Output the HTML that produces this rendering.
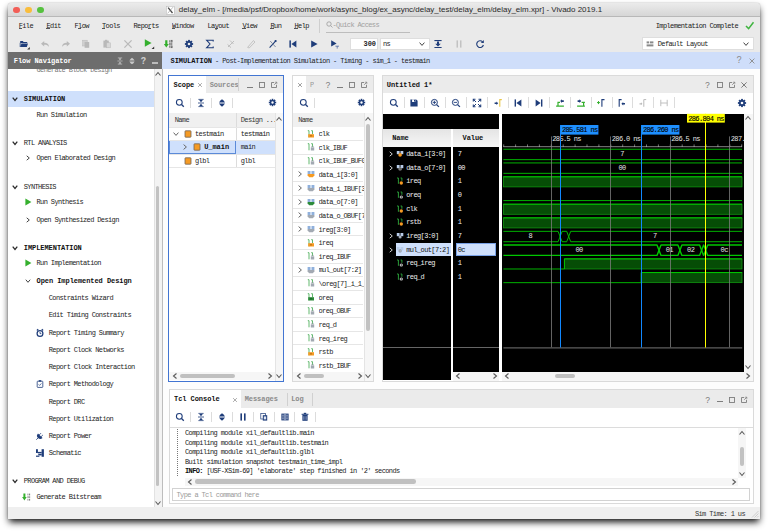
<!DOCTYPE html><html><head><meta charset="utf-8"><title>delay_elm - Vivado 2019.1</title><style>
*{margin:0;padding:0;box-sizing:border-box}
html,body{width:768px;height:532px;overflow:hidden;background:#fff}
body{position:relative;font-family:"Liberation Mono","DejaVu Sans Mono",monospace;font-size:7px;letter-spacing:-0.625px;color:#333}
.b{position:absolute;display:block}
.t{position:absolute;white-space:pre;line-height:12px;height:12px;transform:scaleY(1.12);transform-origin:50% 55%}
.bd{font-weight:bold;color:#111;letter-spacing:-0.06px}
.g{color:#8a8a8a}
.w{color:#fff}
.sans{font-family:"Liberation Sans",sans-serif;letter-spacing:0;transform:none}
u{text-decoration:underline;text-underline-offset:0.3px;text-decoration-thickness:0.8px;text-decoration-color:#666}
</style></head><body>
<div class="b " style="left:8px;top:3px;width:752px;height:516px;background:#ececec;border-radius:3px 3px 0 0;box-shadow:0 4px 7px -1.5px rgba(0,0,0,.95),0 0 1px rgba(0,0,0,.45)"></div>
<div class="b " style="left:8px;top:3px;width:752px;height:13.5px;background:linear-gradient(#ebebeb,#d6d6d6);border-radius:3px 3px 0 0;border-bottom:0.5px solid #b8b8b8"></div>
<div class="b " style="left:13.2px;top:6.6px;width:6.8px;height:6.8px;background:#f25e57;border-radius:50%"></div>
<div class="b " style="left:25.1px;top:6.6px;width:6.8px;height:6.8px;background:#f9bd3c;border-radius:50%"></div>
<div class="b " style="left:37px;top:6.6px;width:6.8px;height:6.8px;background:#56c13f;border-radius:50%"></div>
<svg class="b" style="left:166.2px;top:6.2px;" width="8.6" height="8.6" viewBox="0 0 8.6 8.6"><rect x="0.3" y="0.3" width="8" height="8" fill="#fff" stroke="#bdbdbd" stroke-width="0.6"/><path d="M2.1 1.6L6.5 7" stroke="#4a4a4a" stroke-width="1.3"/><path d="M7 1.2L1.6 7.4" stroke="#777" stroke-width="0.5"/></svg>
<span class="t sans" style="left:178.75px;top:4px;font-size:7.98px;color:#2a2a2a">delay_elm - [/media/psf/Dropbox/home/work/async_blog/ex_async/delay_test/delay_elm/delay_elm.xpr] - Vivado 2019.1</span>
<div class="b " style="left:8px;top:16.5px;width:752px;height:35.5px;background:#eaeaea"></div>
<span class="t" style="left:18.7px;top:19.5px;color:#222">File</span>
<div class="b " style="left:18.6px;top:28.3px;width:3.3px;height:0.8px;background:#555"></div>
<span class="t" style="left:46.5px;top:19.5px;color:#222">Edit</span>
<div class="b " style="left:46.4px;top:28.3px;width:3.3px;height:0.8px;background:#555"></div>
<span class="t" style="left:74.5px;top:19.5px;color:#222">Flow</span>
<div class="b " style="left:77.975px;top:28.3px;width:3.3px;height:0.8px;background:#555"></div>
<span class="t" style="left:102px;top:19.5px;color:#222">Tools</span>
<div class="b " style="left:101.9px;top:28.3px;width:3.3px;height:0.8px;background:#555"></div>
<span class="t" style="left:133.5px;top:19.5px;color:#222">Reports</span>
<div class="b " style="left:147.7px;top:28.3px;width:3.3px;height:0.8px;background:#555"></div>
<span class="t" style="left:172px;top:19.5px;color:#222">Window</span>
<div class="b " style="left:171.9px;top:28.3px;width:3.3px;height:0.8px;background:#555"></div>
<span class="t" style="left:207.5px;top:19.5px;color:#222">Layout</span>
<div class="b " style="left:214.55px;top:28.3px;width:3.3px;height:0.8px;background:#555"></div>
<span class="t" style="left:242.5px;top:19.5px;color:#222">View</span>
<div class="b " style="left:242.4px;top:28.3px;width:3.3px;height:0.8px;background:#555"></div>
<span class="t" style="left:270.5px;top:19.5px;color:#222">Run</span>
<div class="b " style="left:270.4px;top:28.3px;width:3.3px;height:0.8px;background:#555"></div>
<span class="t" style="left:294.5px;top:19.5px;color:#222">Help</span>
<div class="b " style="left:294.4px;top:28.3px;width:3.3px;height:0.8px;background:#555"></div>
<div class="b " style="left:319px;top:19px;width:0.6px;height:14px;background:#cfcfcf"></div>
<svg class="b" style="left:326px;top:20.5px;" width="8" height="8" viewBox="0 0 8 8"><circle cx="3" cy="3" r="2.2" fill="none" stroke="#9a9a9a" stroke-width="0.8"/><path d="M4.6 4.6L6.5 6.5" stroke="#9a9a9a" stroke-width="0.8"/></svg>
<span class="t g" style="left:332.5px;top:18.5px;color:#a0a0a0">-Quick Access</span>
<div class="b " style="left:326px;top:31.5px;width:84px;height:0.6px;background:#bdbdbd"></div>
<span class="t " style="right:30px;top:19.5px;color:#222">Implementation Complete</span>
<svg class="b" style="left:745px;top:21px;" width="10" height="9" viewBox="0 0 10 9"><path d="M1 5 L3.6 7.6 L8.5 1.2" fill="none" stroke="#3fb43f" stroke-width="1.5"/></svg>
<svg class="b" style="left:17.25px;top:36.5px;" width="14" height="14" viewBox="-7 -7 14 14"><path d="M-3.8 -3 h2.6 l0.8 0.9 h3.6 v1.1 h-7z" fill="#1f3d7a"/><path d="M-3.8 3 l1.2 -3.6 h6.6 l-1.2 3.6z" fill="#1f3d7a"/><path d="M-3.8 -1.2v4.2" stroke="#1f3d7a" stroke-width="0.8"/><path d="M5.8 3v2.6h-2.6z" fill="#333"/></svg>
<svg class="b" style="left:39.5px;top:38.5px;" width="10" height="10" viewBox="-5 -5 10 10"><path d="M-4 -0.3 L-0.8 -3 v1.7 c3 0 4.6 1.4 4.8 4.2 c-1 -1.6 -2.4 -2.2 -4.8 -2.2 v1.8z" fill="#b9b9b9"/></svg>
<svg class="b" style="left:60.5px;top:38.5px;" width="10" height="10" viewBox="-5 -5 10 10"><path d="M4 -0.3 L0.8 -3 v1.7 c-3 0 -4.6 1.4 -4.8 4.2 c1 -1.6 2.4 -2.2 4.8 -2.2 v1.8z" fill="#b9b9b9"/></svg>
<svg class="b" style="left:81.25px;top:38.5px;" width="10" height="10" viewBox="-5 -5 10 10"><rect x="-3.4" y="-3.8" width="4.6" height="5.8" fill="#d0d0d0" stroke="#b9b9b9" stroke-width="0.5"/><rect x="-1.4" y="-2" width="4.6" height="5.8" fill="#b9b9b9"/></svg>
<svg class="b" style="left:102px;top:38.5px;" width="10" height="10" viewBox="-5 -5 10 10"><rect x="-3.6" y="-3.4" width="5.4" height="7" fill="#b9b9b9"/><rect x="-2" y="-4.2" width="2.2" height="1.4" fill="#b9b9b9"/><rect x="-0.4" y="-1.2" width="4" height="5" fill="#d8d8d8" stroke="#b9b9b9" stroke-width="0.5"/></svg>
<svg class="b" style="left:122.75px;top:38.5px;" width="10" height="10" viewBox="-5 -5 10 10"><path d="M-3.6 -3.6L3.6 3.6M3.6 -3.6L-3.6 3.6" stroke="#b9b9b9" stroke-width="1.3"/></svg>
<svg class="b" style="left:140.8px;top:36.1px;" width="14" height="14" viewBox="-7 -7 14 14"><path d="M-3.2 -3.8L3.6 0L-3.2 3.8z" fill="#35b02e"/><path d="M6.2 3.4v2.6h-2.6z" fill="#333"/></svg>
<svg class="b" style="left:163.75px;top:38.5px;" width="10" height="10" viewBox="-5 -5 10 10"><path d="M-3.8 -3.8h2.2v3.8h1.4l-2.5 3.6l-2.5 -3.6h1.4z" fill="#35b02e"/><g fill="#555"><rect x="0.4" y="-3.8" width="0.8" height="2"/><rect x="2" y="-3.8" width="1.2" height="2" fill="none" stroke="#555" stroke-width="0.5"/><rect x="0.4" y="-1" width="1.2" height="2" fill="none" stroke="#555" stroke-width="0.5"/><rect x="2.4" y="-1" width="0.8" height="2"/><rect x="0.4" y="1.8" width="0.8" height="2"/><rect x="2" y="1.8" width="1.2" height="2" fill="none" stroke="#555" stroke-width="0.5"/></g></svg>
<svg class="b" style="left:184.25px;top:38.5px;" width="10" height="10" viewBox="-5 -5 10 10"><g fill="#1f3d7a"><circle r="2.9"/><g ><rect x="-0.9" y="-4.1" width="1.8" height="8.2"/></g><rect x="-0.9" y="-4.1" width="1.8" height="8.2" transform="rotate(45)"/><rect x="-0.9" y="-4.1" width="1.8" height="8.2" transform="rotate(90)"/><rect x="-0.9" y="-4.1" width="1.8" height="8.2" transform="rotate(135)"/></g><circle r="1.3" fill="#eaeaea"/></svg>
<svg class="b" style="left:205px;top:38.5px;" width="10" height="10" viewBox="-5 -5 10 10"><path d="M3.2 -2.6v-1.2h-6.6l3.4 3.8l-3.4 3.8h6.6v-1.2" fill="none" stroke="#1f3d7a" stroke-width="1.1"/></svg>
<svg class="b" style="left:225.75px;top:38.5px;" width="10" height="10" viewBox="-5 -5 10 10"><path d="M-3 3L3 -3M-1 -3.5l3.5 3.5M-3.4 0.5L0 3.6" stroke="#b9b9b9" stroke-width="0.9"/></svg>
<svg class="b" style="left:246.25px;top:38.5px;" width="10" height="10" viewBox="-5 -5 10 10"><path d="M-3.4 3.4L2.4 -3.4l1.6 1.4L-1.8 4z" fill="none" stroke="#b9b9b9" stroke-width="0.8"/></svg>
<svg class="b" style="left:267.5px;top:38.5px;" width="10" height="10" viewBox="-5 -5 10 10"><path d="M-3.4 3.6L3 -3.4" stroke="#1f3d7a" stroke-width="1.1"/><path d="M-2.8 -3l5.4 6" stroke="#7a869c" stroke-width="0.9"/><circle cx="2.6" cy="-3" r="1.1" fill="#1f3d7a"/></svg>
<svg class="b" style="left:288.25px;top:38.5px;" width="10" height="10" viewBox="-5 -5 10 10"><rect x="-3.6" y="-3.6" width="1.5" height="7.2" fill="#1f3d7a"/><path d="M3.4 -3.6L-1.6 0L3.4 3.6z" fill="#1f3d7a"/></svg>
<svg class="b" style="left:308.75px;top:38.5px;" width="10" height="10" viewBox="-5 -5 10 10"><path d="M-2.8 -3.6L3.6 0L-2.8 3.6z" fill="#1f3d7a"/></svg>
<svg class="b" style="left:330px;top:38.5px;" width="10" height="10" viewBox="-5 -5 10 10"><path d="M-3.8 -3.8L1.6 -0.6L-3.8 2.6z" fill="#1f3d7a"/><path d="M0.4 2.2h3.6M2.2 2.2v2.4" stroke="#3c5a99" stroke-width="0.7"/></svg>
<div class="b " style="left:349.5px;top:37.5px;width:28.5px;height:12px;background:#fff;border:0.5px solid #dedede"></div>
<span class="t bd" style="right:392px;top:37.5px;color:#222">300</span>
<div class="b " style="left:379.5px;top:37.5px;width:50px;height:12px;background:#fff;border:0.5px solid #dedede"></div>
<span class="t " style="left:383px;top:37.5px;color:#222">ns</span>
<svg class="b" style="left:417px;top:38.5px;" width="10" height="10" viewBox="-5 -5 10 10"><path d="M-2.4 -1.4L0 1.4L2.4 -1.4" fill="none" stroke="#444" stroke-width="1"/></svg>
<svg class="b" style="left:433.25px;top:38.5px;" width="10" height="10" viewBox="-5 -5 10 10"><rect x="-3.6" y="-4" width="7.2" height="1.1" fill="#1f3d7a"/><path d="M-1 -2.4h2v2.2h1.8L0 2.6L-2.8 -0.2h1.8z" fill="#1f3d7a"/><rect x="-3.6" y="3" width="7.2" height="1" fill="#1f3d7a"/></svg>
<svg class="b" style="left:454.25px;top:38.5px;" width="10" height="10" viewBox="-5 -5 10 10"><rect x="-2.4" y="-3.6" width="1.2" height="7.2" fill="#b9b9b9"/><rect x="1.2" y="-3.6" width="1.2" height="7.2" fill="#b9b9b9"/></svg>
<svg class="b" style="left:475px;top:38.5px;" width="10" height="10" viewBox="-5 -5 10 10"><path d="M2.6 -2.2A3.4 3.4 0 1 0 3.4 1" fill="none" stroke="#1f3d7a" stroke-width="1.1"/><path d="M3.8 -4v3h-3z" fill="#1f3d7a"/></svg>
<div class="b " style="left:642.25px;top:36.75px;width:112px;height:13.25px;background:#fff;border:0.5px solid #dedede"></div>
<svg class="b" style="left:644.75px;top:38.5px;" width="10" height="10" viewBox="-5 -5 10 10"><rect x="-3.4" y="-2.6" width="2.6" height="2" fill="#8a8a8a"/><rect x="0" y="-2.6" width="3.4" height="2" fill="#8a8a8a"/><rect x="-3.4" y="0.4" width="6.8" height="2" fill="#8a8a8a"/></svg>
<span class="t " style="left:657.75px;top:37.5px;color:#222">Default Layout</span>
<svg class="b" style="left:741px;top:38.5px;" width="10" height="10" viewBox="-5 -5 10 10"><path d="M-2.4 -1.4L0 1.4L2.4 -1.4" fill="none" stroke="#444" stroke-width="1"/></svg>
<div class="b " style="left:8px;top:52px;width:154px;height:16.75px;background:#6d6d6d"></div>
<span class="t bd w" style="left:13.75px;top:54.5px;color:#fff">Flow Navigator</span>
<svg class="b" style="left:114.6px;top:55.5px;" width="10" height="10" viewBox="-5 -5 10 10"><path d="M-2.2 -3.1h4.4M-2.2 3.1h4.4M-2.6 0h5.2" stroke="#d4d4d4" stroke-width="0.6"/><path d="M-1.3 -2.6h2.6L0 -0.7zM-1.3 2.6h2.6L0 0.7z" fill="#d4d4d4"/></svg>
<svg class="b" style="left:126.5px;top:55.7px;" width="10" height="10" viewBox="-5 -5 10 10"><path d="M-2.6 -0.5Q-1.6 -2.4 0 -3.3Q1.6 -2.4 2.6 -0.5zM-2.6 0.5Q-1.6 2.4 0 3.3Q1.6 2.4 2.6 0.5z" fill="#c8c8c8"/></svg>
<span class="t bd" style="left:140.8px;top:55.5px;color:#d0d0d0;font-size:9px">?</span>
<div class="b " style="left:152px;top:62.3px;width:6.2px;height:1.4px;background:#bcbcbc"></div>
<div class="b " style="left:162px;top:52px;width:598px;height:16.75px;background:#cfdefa"></div>
<span class="t bd" style="left:170.5px;top:54.5px;">SIMULATION</span>
<span class="t " style="left:211.5px;top:54.5px;color:#222"> - Post-Implementation Simulation - Timing - sim_1 - testmain</span>
<span class="t " style="left:736.5px;top:55.3px;color:#8a8a8a;font-size:9px">?</span>
<svg class="b" style="left:746.5px;top:55.9px;" width="10" height="10" viewBox="-5 -5 10 10"><path d="M-2.4 -2.4L2.4 2.4M2.4 -2.4L-2.4 2.4" stroke="#8a8a8a" stroke-width="0.9"/></svg>
<div class="b " style="left:8px;top:68.75px;width:145.5px;height:438.5px;background:#fff"></div>
<div class="b " style="left:153.5px;top:68.75px;width:8.5px;height:438.5px;background:#f3f3f3;border-left:0.5px solid #e2e2e2"></div>
<div class="b " style="left:155.6px;top:185.5px;width:3.6px;height:300px;background:#c2c2c2;border-radius:2px"></div>
<svg class="b" style="left:152.7px;top:68.75px;" width="10" height="10" viewBox="-5 -5 10 10"><path d="M-2.5 1.5L0 -1.5L2.5 1.5" fill="none" stroke="#5a5a5a" stroke-width="1.1"/></svg>
<svg class="b" style="left:152.7px;top:498px;" width="10" height="10" viewBox="-5 -5 10 10"><path d="M-2.5 -1.5L0 1.5L2.5 -1.5" fill="none" stroke="#5a5a5a" stroke-width="1.1"/></svg>
<div class="b " style="left:8px;top:90.5px;width:145.5px;height:16.5px;background:#cfe0fc"></div>
<div class="b" style="left:8px;top:68.75px;width:145px;height:8px;overflow:hidden"><span class="t" style="left:28.5px;top:-4.3px;color:#777">Generate Block Design</span></div>
<svg class="b" style="left:10.2px;top:93.65px;" width="10" height="10" viewBox="-5 -5 10 10"><path d="M-2.3 -1.4L0 1.4L2.3 -1.4" fill="none" stroke="#2a2a2a" stroke-width="1.25"/></svg>
<span class="t bd" style="left:23.75px;top:92.65px;">SIMULATION</span>
<span class="t " style="left:36.5px;top:108.65px;color:#222">Run Simulation</span>
<svg class="b" style="left:10.2px;top:137.9px;" width="10" height="10" viewBox="-5 -5 10 10"><path d="M-2.3 -1.4L0 1.4L2.3 -1.4" fill="none" stroke="#2a2a2a" stroke-width="1.25"/></svg>
<span class="t " style="left:23.75px;top:136.9px;color:#222">RTL ANALYSIS</span>
<svg class="b" style="left:22.5px;top:153.4px;" width="10" height="10" viewBox="-5 -5 10 10"><path d="M-1.3 -2.2L1.3 0L-1.3 2.2" fill="none" stroke="#444" stroke-width="1"/></svg>
<span class="t " style="left:36.5px;top:152.4px;color:#222">Open Elaborated Design</span>
<svg class="b" style="left:10.2px;top:181.65px;" width="10" height="10" viewBox="-5 -5 10 10"><path d="M-2.3 -1.4L0 1.4L2.3 -1.4" fill="none" stroke="#2a2a2a" stroke-width="1.25"/></svg>
<span class="t " style="left:23.75px;top:180.65px;color:#222">SYNTHESIS</span>
<svg class="b" style="left:22.5px;top:197.4px;" width="10" height="10" viewBox="-5 -5 10 10"><path d="M-2.6 -3.4L3.4 0L-2.6 3.4z" fill="#35b02e"/></svg>
<span class="t " style="left:36.5px;top:196.4px;color:#222">Run Synthesis</span>
<svg class="b" style="left:22.5px;top:214.9px;" width="10" height="10" viewBox="-5 -5 10 10"><path d="M-1.3 -2.2L1.3 0L-1.3 2.2" fill="none" stroke="#444" stroke-width="1"/></svg>
<span class="t " style="left:36.5px;top:213.9px;color:#222">Open Synthesized Design</span>
<svg class="b" style="left:10.2px;top:242.9px;" width="10" height="10" viewBox="-5 -5 10 10"><path d="M-2.3 -1.4L0 1.4L2.3 -1.4" fill="none" stroke="#2a2a2a" stroke-width="1.25"/></svg>
<span class="t bd" style="left:23.75px;top:241.9px;">IMPLEMENTATION</span>
<svg class="b" style="left:22.5px;top:258.4px;" width="10" height="10" viewBox="-5 -5 10 10"><path d="M-2.6 -3.4L3.4 0L-2.6 3.4z" fill="#35b02e"/></svg>
<span class="t " style="left:36.5px;top:257.4px;color:#222">Run Implementation</span>
<svg class="b" style="left:22.5px;top:275.9px;" width="10" height="10" viewBox="-5 -5 10 10"><path d="M-2.2 -1.3L0 1.3L2.2 -1.3" fill="none" stroke="#444" stroke-width="1"/></svg>
<span class="t bd" style="left:36.5px;top:274.9px;">Open Implemented Design</span>
<span class="t " style="left:48.75px;top:292.15px;color:#222">Constraints Wizard</span>
<span class="t " style="left:48.75px;top:309.15px;color:#222">Edit Timing Constraints</span>
<svg class="b" style="left:35.2px;top:327.65px;" width="10" height="10" viewBox="-5 -5 10 10"><circle cy="0.5" r="2.9" fill="none" stroke="#1f3d7a" stroke-width="1.25"/><path d="M0 -1.1v1.7h1.3" fill="none" stroke="#1f3d7a" stroke-width="0.8"/><path d="M-3.1 -2.5l1.3 -1.3M3.1 -2.5l-1.3 -1.3" stroke="#1f3d7a" stroke-width="1.2"/></svg>
<span class="t " style="left:48.75px;top:326.65px;color:#222">Report Timing Summary</span>
<span class="t " style="left:48.75px;top:343.65px;color:#222">Report Clock Networks</span>
<span class="t " style="left:48.75px;top:360.9px;color:#222">Report Clock Interaction</span>
<svg class="b" style="left:35.2px;top:379.15px;" width="10" height="10" viewBox="-5 -5 10 10"><rect x="-2.8" y="-2.8" width="5.6" height="6.2" rx="0.6" fill="none" stroke="#1f3d7a" stroke-width="0.8"/><rect x="-1.2" y="-3.8" width="2.4" height="1.4" fill="#1f3d7a"/><path d="M-1.4 0.4l1 1l1.8 -2" fill="none" stroke="#1f3d7a" stroke-width="0.7"/></svg>
<span class="t " style="left:48.75px;top:378.15px;color:#222">Report Methodology</span>
<span class="t " style="left:48.75px;top:395.65px;color:#222">Report DRC</span>
<span class="t " style="left:48.75px;top:412.65px;color:#222">Report Utilization</span>
<svg class="b" style="left:35.3px;top:430.7px;" width="10" height="10" viewBox="-5 -5 10 10"><g transform="rotate(45)" fill="#1f3d7a" stroke="#1f3d7a"><path d="M-3.2 -0.4A3.2 3.2 0 0 0 3.2 -0.4z" stroke="none"/><path d="M-1.3 -0.4v-2.2M1.3 -0.4v-2.2" stroke-width="0.9"/><path d="M0 2.6v2.6" stroke-width="0.8"/></g></svg>
<span class="t " style="left:48.75px;top:429.9px;color:#222">Report Power</span>
<svg class="b" style="left:35.2px;top:448.35px;" width="10" height="10" viewBox="-5 -5 10 10"><g fill="#1f3d7a"><rect x="1.6" y="-3.8" width="2.3" height="7.6"/><rect x="-4" y="-3.8" width="1.9" height="3.8"/><rect x="-2.2" y="-1.1" width="3.9" height="1.5"/><rect x="-1.7" y="1" width="3.4" height="1.4"/><rect x="-4" y="2.6" width="3.4" height="1.2"/></g></svg>
<span class="t " style="left:48.75px;top:447.15px;color:#222">Schematic</span>
<svg class="b" style="left:10.2px;top:476.4px;" width="10" height="10" viewBox="-5 -5 10 10"><path d="M-2.3 -1.4L0 1.4L2.3 -1.4" fill="none" stroke="#2a2a2a" stroke-width="1.25"/></svg>
<span class="t " style="left:23.75px;top:475.4px;color:#222">PROGRAM AND DEBUG</span>
<svg class="b" style="left:22.2px;top:491.9px;" width="10" height="10" viewBox="-5 -5 10 10"><path d="M-3.6 -3.6h2v3.6h1.3l-2.3 3.4l-2.3 -3.4h1.3z" fill="#35b02e"/><g fill="#666"><rect x="0.6" y="-3.4" width="0.7" height="1.8"/><rect x="2.2" y="-3.4" width="0.9" height="1.8"/><rect x="0.6" y="-0.8" width="0.9" height="1.8"/><rect x="2.4" y="-0.8" width="0.7" height="1.8"/><rect x="0.6" y="1.8" width="0.7" height="1.8"/><rect x="2.2" y="1.8" width="0.9" height="1.8"/></g></svg>
<span class="t " style="left:36.5px;top:490.9px;color:#222">Generate Bitstream</span>
<div class="b " style="left:8px;top:507.25px;width:752px;height:11.75px;background:#efefef"></div>
<span class="t " style="right:23px;top:507.5px;color:#333">Sim Time: 1 us</span>
<svg class="b" style="left:751px;top:510px;" width="8" height="8" viewBox="0 0 8 8"><path d="M1 7.5L7.5 1M3.5 7.5L7.5 3.5M6 7.5L7.5 6" stroke="#b5b5b5" stroke-width="0.6"/></svg>
<div class="b " style="left:162.5px;top:68.75px;width:597.5px;height:438.5px;background:#fdfdfd"></div>
<div class="b " style="left:162px;top:68.75px;width:0.7px;height:438.5px;background:#bdbdbd"></div>
<div class="b " style="left:168.1px;top:75.2px;width:116.2px;height:306.4px;background:#fff;border:1.25px solid #4275d2"></div>
<div class="b " style="left:169.3px;top:76.2px;width:114px;height:16.5px;background:#ebebeb"></div>
<div class="b " style="left:169.3px;top:76.2px;width:36.5px;height:16.5px;background:#fff"></div>
<span class="t bd" style="left:173.5px;top:78.5px;">Scope</span>
<svg class="b" style="left:194.5px;top:80.3px;" width="10" height="10" viewBox="-5 -5 10 10"><path d="M-1.9 -1.9L1.9 1.9M1.9 -1.9L-1.9 1.9" stroke="#8a8a8a" stroke-width="0.7"/></svg>
<span class="t bd" style="left:209.7px;top:78.6px;color:#8c8c8c">Sources</span>
<div class="b " style="left:238.3px;top:78px;width:0.6px;height:13px;background:#d0d0d0"></div>
<div class="b " style="left:247px;top:86.7px;width:6px;height:1px;background:#7d7d7d"></div>
<svg class="b" style="left:257px;top:79.8px;" width="10" height="10" viewBox="-5 -5 10 10"><rect x="-2.5" y="-2.5" width="5" height="5" fill="none" stroke="#7d7d7d" stroke-width="0.9"/></svg>
<svg class="b" style="left:269.2px;top:79.8px;" width="10" height="10" viewBox="-5 -5 10 10"><path d="M0.2 -2.5h-2.7v5h5v-2.7" fill="none" stroke="#7d7d7d" stroke-width="0.9"/><path d="M0.2 -0.2L2.7 -2.7M1.2 -2.8h1.6v1.6" fill="none" stroke="#7d7d7d" stroke-width="0.8"/></svg>
<svg class="b" style="left:175.3px;top:97.7px;" width="10" height="10" viewBox="-5 -5 10 10"><circle cx="-0.7" cy="-0.7" r="2.9" fill="none" stroke="#1f3d7a" stroke-width="1.05"/><path d="M1.5 1.5L3.8 3.8" stroke="#1f3d7a" stroke-width="1.3"/></svg>
<div class="b " style="left:190.2px;top:97.7px;width:0.6px;height:10px;background:#dcdcdc"></div>
<svg class="b" style="left:195.8px;top:97.7px;" width="10" height="10" viewBox="-5 -5 10 10"><path d="M-2.6 -3.6h5.2M-2.6 3.6h5.2M-3 0h6" stroke="#1f3d7a" stroke-width="0.8"/><path d="M-1.8 -3h3.6L0 -0.8zM-1.8 3h3.6L0 0.8z" fill="#1f3d7a"/></svg>
<div class="b " style="left:211px;top:97.7px;width:0.6px;height:10px;background:#dcdcdc"></div>
<svg class="b" style="left:216.7px;top:97.7px;" width="10" height="10" viewBox="-5 -5 10 10"><path d="M-3 -0.6Q-1.8 -2.6 0 -3.7Q1.8 -2.6 3 -0.6zM-3 0.6Q-1.8 2.6 0 3.7Q1.8 2.6 3 0.6z" fill="#1f3d7a"/></svg>
<div class="b " style="left:232.2px;top:97.7px;width:0.6px;height:10px;background:#dcdcdc"></div>
<svg class="b" style="left:268px;top:98.2px;" width="9" height="9" viewBox="-5 -5 10 10"><g fill="#1f3d7a"><circle r="2.9"/><g ><rect x="-0.9" y="-4.1" width="1.8" height="8.2"/></g><rect x="-0.9" y="-4.1" width="1.8" height="8.2" transform="rotate(45)"/><rect x="-0.9" y="-4.1" width="1.8" height="8.2" transform="rotate(90)"/><rect x="-0.9" y="-4.1" width="1.8" height="8.2" transform="rotate(135)"/></g><circle r="1.3" fill="#fff"/></svg>
<div class="b " style="left:169.3px;top:112.8px;width:114px;height:14px;background:#f0f0f0"></div>
<span class="t " style="left:174.7px;top:114px;color:#333">Name</span>
<span class="t " style="left:240.8px;top:114px;color:#333">Design ...</span>
<div class="b " style="left:235.6px;top:112.8px;width:0.6px;height:54.5px;background:#dcdcdc"></div>
<div class="b " style="left:169.3px;top:140.42px;width:106px;height:13.62px;background:#cfe0fc"></div>
<div class="b " style="left:169.3px;top:140.42px;width:66.6px;height:13.62px;background:#cfe0fc;border:0.7px solid #5b8ad8"></div>
<div class="b " style="left:169.3px;top:126.5px;width:106px;height:0.6px;background:#e6e6e6"></div>
<div class="b " style="left:169.3px;top:140.12px;width:106px;height:0.6px;background:#e6e6e6"></div>
<div class="b " style="left:169.3px;top:153.74px;width:106px;height:0.6px;background:#e6e6e6"></div>
<div class="b " style="left:169.3px;top:167.36px;width:106px;height:0.6px;background:#e6e6e6"></div>
<svg class="b" style="left:171.2px;top:128.61px;" width="10" height="10" viewBox="-5 -5 10 10"><path d="M-2.4 -1.4L0 1.4L2.4 -1.4" fill="none" stroke="#666" stroke-width="1"/></svg>
<svg class="b" style="left:182.7px;top:128.61px;" width="10" height="10" viewBox="-5 -5 10 10"><rect x="-3" y="-3.2" width="6" height="6.4" rx="0.6" fill="#f59a23" stroke="#6f6258" stroke-width="0.8"/></svg>
<span class="t " style="left:195px;top:127.61px;color:#222">testmain</span>
<span class="t " style="left:240.8px;top:127.61px;color:#222">testmain</span>
<svg class="b" style="left:180.3px;top:142.23px;" width="10" height="10" viewBox="-5 -5 10 10"><path d="M-1.4 -2.4L1.4 0L-1.4 2.4" fill="none" stroke="#666" stroke-width="1"/></svg>
<svg class="b" style="left:192px;top:142.23px;" width="10" height="10" viewBox="-5 -5 10 10"><rect x="-3" y="-3.2" width="6" height="6.4" rx="0.6" fill="#f59a23" stroke="#6f6258" stroke-width="0.8"/></svg>
<span class="t bd" style="left:204.2px;top:141.23px;">U_main</span>
<span class="t " style="left:240.8px;top:141.23px;color:#222">main</span>
<svg class="b" style="left:182.7px;top:155.85px;" width="10" height="10" viewBox="-5 -5 10 10"><rect x="-3" y="-3.2" width="6" height="6.4" rx="0.6" fill="#f59a23" stroke="#6f6258" stroke-width="0.8"/></svg>
<span class="t " style="left:195px;top:154.85px;color:#222">glbl</span>
<span class="t " style="left:240.8px;top:154.85px;color:#222">glbl</span>
<div class="b " style="left:275px;top:112.8px;width:8.3px;height:267.8px;background:#f6f6f6;border-left:0.5px solid #e4e4e4"></div>
<svg class="b" style="left:273.8px;top:114px;" width="10" height="10" viewBox="-5 -5 10 10"><path d="M-2.5 1.5L0 -1.5L2.5 1.5" fill="none" stroke="#5a5a5a" stroke-width="1.1"/></svg>
<svg class="b" style="left:273.8px;top:371px;" width="10" height="10" viewBox="-5 -5 10 10"><path d="M-2.5 -1.5L0 1.5L2.5 -1.5" fill="none" stroke="#5a5a5a" stroke-width="1.1"/></svg>
<div class="b " style="left:169.3px;top:371.5px;width:106px;height:8.9px;background:#f6f6f6"></div>
<svg class="b" style="left:170px;top:371.1px;" width="10" height="10" viewBox="-5 -5 10 10"><path d="M1.5 -2.5L-1.5 0L1.5 2.5" fill="none" stroke="#5a5a5a" stroke-width="1.1"/></svg>
<svg class="b" style="left:265px;top:371.1px;" width="10" height="10" viewBox="-5 -5 10 10"><path d="M-1.5 -2.5L1.5 0L-1.5 2.5" fill="none" stroke="#5a5a5a" stroke-width="1.1"/></svg>
<div class="b " style="left:180px;top:373.7px;width:55px;height:4.6px;background:#c0c0c0;border-radius:2.3px"></div>
<div class="b " style="left:292.3px;top:75.2px;width:81.7px;height:306.4px;background:#fff;border:1px solid #dadada"></div>
<div class="b " style="left:293.3px;top:76.2px;width:79.7px;height:16.5px;background:#ebebeb"></div>
<div class="b " style="left:293.3px;top:76.2px;width:13px;height:16.5px;background:#fff"></div>
<svg class="b" style="left:295px;top:80.3px;" width="10" height="10" viewBox="-5 -5 10 10"><path d="M-1.9 -1.9L1.9 1.9M1.9 -1.9L-1.9 1.9" stroke="#777" stroke-width="0.7"/></svg>
<span class="t " style="left:310px;top:78.6px;color:#999">P</span>
<span class="t " style="left:325.5px;top:79.9px;color:#7d7d7d;font-size:8.5px">?</span>
<div class="b " style="left:336.5px;top:86.7px;width:6px;height:1px;background:#7d7d7d"></div>
<svg class="b" style="left:346.5px;top:79.8px;" width="10" height="10" viewBox="-5 -5 10 10"><rect x="-2.5" y="-2.5" width="5" height="5" fill="none" stroke="#7d7d7d" stroke-width="0.9"/></svg>
<svg class="b" style="left:358.5px;top:79.8px;" width="10" height="10" viewBox="-5 -5 10 10"><path d="M0.2 -2.5h-2.7v5h5v-2.7" fill="none" stroke="#7d7d7d" stroke-width="0.9"/><path d="M0.2 -0.2L2.7 -2.7M1.2 -2.8h1.6v1.6" fill="none" stroke="#7d7d7d" stroke-width="0.8"/></svg>
<svg class="b" style="left:299px;top:97.7px;" width="10" height="10" viewBox="-5 -5 10 10"><circle cx="-0.7" cy="-0.7" r="2.9" fill="none" stroke="#1f3d7a" stroke-width="1.05"/><path d="M1.5 1.5L3.8 3.8" stroke="#1f3d7a" stroke-width="1.3"/></svg>
<div class="b " style="left:314.2px;top:97.7px;width:0.6px;height:10px;background:#dcdcdc"></div>
<svg class="b" style="left:357.3px;top:98.2px;" width="9" height="9" viewBox="-5 -5 10 10"><g fill="#1f3d7a"><circle r="2.9"/><g ><rect x="-0.9" y="-4.1" width="1.8" height="8.2"/></g><rect x="-0.9" y="-4.1" width="1.8" height="8.2" transform="rotate(45)"/><rect x="-0.9" y="-4.1" width="1.8" height="8.2" transform="rotate(90)"/><rect x="-0.9" y="-4.1" width="1.8" height="8.2" transform="rotate(135)"/></g><circle r="1.3" fill="#fff"/></svg>
<div class="b " style="left:293.3px;top:112.8px;width:79.7px;height:14px;background:#f0f0f0"></div>
<span class="t " style="left:298.2px;top:114px;color:#333">Name</span>
<svg class="b" style="left:305.7px;top:128.61px;" width="10" height="10" viewBox="-5 -5 10 10"><path d="M-3.2 -3.3h1.2v6.6M0.2 -3.3h1.3v3.4" fill="none" stroke="#3aa64a" stroke-width="0.8"/><rect x="-2.8" y="0.2" width="5.8" height="3.3" fill="#f59a23"/><rect x="-0.5" y="1.2" width="1" height="1.2" fill="#8a4b00"/></svg>
<div class="b" style="left:318.5px;top:128.21px;width:45px;height:12px;overflow:hidden"><span class="t" style="left:0;top:0;color:#222">clk</span></div>
<div class="b " style="left:293.3px;top:140.12px;width:70px;height:0.6px;background:#e6e6e6"></div>
<svg class="b" style="left:305.7px;top:142.23px;" width="10" height="10" viewBox="-5 -5 10 10"><path d="M-3.2 -3.3h1.2v6.6M0.2 -3.3h1.3v3.4" fill="none" stroke="#3aa64a" stroke-width="0.8"/><rect x="-0.2" y="0.4" width="3.4" height="3.1" fill="#a2a9b2"/><path d="M0.6 0.4v-1.2h1.8v1.2" fill="none" stroke="#a2a9b2" stroke-width="0.6"/></svg>
<div class="b" style="left:318.5px;top:141.83px;width:45px;height:12px;overflow:hidden"><span class="t" style="left:0;top:0;color:#222">clk_IBUF</span></div>
<div class="b " style="left:293.3px;top:153.74px;width:70px;height:0.6px;background:#e6e6e6"></div>
<svg class="b" style="left:305.7px;top:155.85px;" width="10" height="10" viewBox="-5 -5 10 10"><path d="M-3.2 -3.3h1.2v6.6M0.2 -3.3h1.3v3.4" fill="none" stroke="#3aa64a" stroke-width="0.8"/><rect x="-0.2" y="0.4" width="3.4" height="3.1" fill="#a2a9b2"/><path d="M0.6 0.4v-1.2h1.8v1.2" fill="none" stroke="#a2a9b2" stroke-width="0.6"/></svg>
<div class="b" style="left:318.5px;top:155.45px;width:45px;height:12px;overflow:hidden"><span class="t" style="left:0;top:0;color:#222">clk_IBUF_BUFG</span></div>
<div class="b " style="left:293.3px;top:167.36px;width:70px;height:0.6px;background:#e6e6e6"></div>
<svg class="b" style="left:295.3px;top:169.47px;" width="10" height="10" viewBox="-5 -5 10 10"><path d="M-1.4 -2.4L1.4 0L-1.4 2.4" fill="none" stroke="#666" stroke-width="1"/></svg>
<svg class="b" style="left:305.7px;top:169.47px;" width="10" height="10" viewBox="-5 -5 10 10"><rect x="-3.4" y="-3" width="2.9" height="3" fill="#8fb0dc"/><rect x="0.5" y="-3" width="2.9" height="3" fill="#8fb0dc"/><path d="M-3.4 0h6.8v1.4l-1.6 1.8h-3.6l-1.6 -1.8z" fill="#f59a23"/></svg>
<div class="b" style="left:318.5px;top:169.07px;width:45px;height:12px;overflow:hidden"><span class="t" style="left:0;top:0;color:#222">data_i[3:0]</span></div>
<div class="b " style="left:293.3px;top:180.98px;width:70px;height:0.6px;background:#e6e6e6"></div>
<svg class="b" style="left:295.3px;top:183.09px;" width="10" height="10" viewBox="-5 -5 10 10"><path d="M-1.4 -2.4L1.4 0L-1.4 2.4" fill="none" stroke="#666" stroke-width="1"/></svg>
<svg class="b" style="left:305.7px;top:183.09px;" width="10" height="10" viewBox="-5 -5 10 10"><rect x="-3.4" y="-3" width="2.9" height="3" fill="#8fb0dc"/><rect x="0.5" y="-3" width="2.9" height="3" fill="#8fb0dc"/><path d="M-3.4 0h6.8v1.4l-1.6 1.8h-3.6l-1.6 -1.8z" fill="#a2a9b2"/></svg>
<div class="b" style="left:318.5px;top:182.69px;width:45px;height:12px;overflow:hidden"><span class="t" style="left:0;top:0;color:#222">data_i_IBUF[3</span></div>
<div class="b " style="left:293.3px;top:194.6px;width:70px;height:0.6px;background:#e6e6e6"></div>
<svg class="b" style="left:295.3px;top:196.71px;" width="10" height="10" viewBox="-5 -5 10 10"><path d="M-1.4 -2.4L1.4 0L-1.4 2.4" fill="none" stroke="#666" stroke-width="1"/></svg>
<svg class="b" style="left:305.7px;top:196.71px;" width="10" height="10" viewBox="-5 -5 10 10"><rect x="-3.4" y="-3" width="2.9" height="3" fill="#8fb0dc"/><rect x="0.5" y="-3" width="2.9" height="3" fill="#8fb0dc"/><path d="M-3.4 0h6.8v1.4l-1.6 1.8h-3.6l-1.6 -1.8z" fill="#2c8a3a"/></svg>
<div class="b" style="left:318.5px;top:196.31px;width:45px;height:12px;overflow:hidden"><span class="t" style="left:0;top:0;color:#222">data_o[7:0]</span></div>
<div class="b " style="left:293.3px;top:208.22px;width:70px;height:0.6px;background:#e6e6e6"></div>
<svg class="b" style="left:295.3px;top:210.33px;" width="10" height="10" viewBox="-5 -5 10 10"><path d="M-1.4 -2.4L1.4 0L-1.4 2.4" fill="none" stroke="#666" stroke-width="1"/></svg>
<svg class="b" style="left:305.7px;top:210.33px;" width="10" height="10" viewBox="-5 -5 10 10"><rect x="-3.4" y="-3" width="2.9" height="3" fill="#8fb0dc"/><rect x="0.5" y="-3" width="2.9" height="3" fill="#8fb0dc"/><path d="M-3.4 0h6.8v1.4l-1.6 1.8h-3.6l-1.6 -1.8z" fill="#a2a9b2"/></svg>
<div class="b" style="left:318.5px;top:209.93px;width:45px;height:12px;overflow:hidden"><span class="t" style="left:0;top:0;color:#222">data_o_OBUF[7</span></div>
<div class="b " style="left:293.3px;top:221.84px;width:70px;height:0.6px;background:#e6e6e6"></div>
<svg class="b" style="left:295.3px;top:223.95px;" width="10" height="10" viewBox="-5 -5 10 10"><path d="M-1.4 -2.4L1.4 0L-1.4 2.4" fill="none" stroke="#666" stroke-width="1"/></svg>
<svg class="b" style="left:305.7px;top:223.95px;" width="10" height="10" viewBox="-5 -5 10 10"><rect x="-3.4" y="-3" width="2.9" height="3" fill="#8fb0dc"/><rect x="0.5" y="-3" width="2.9" height="3" fill="#8fb0dc"/><path d="M-3.4 0h6.8v1.4l-1.6 1.8h-3.6l-1.6 -1.8z" fill="#a2a9b2"/></svg>
<div class="b" style="left:318.5px;top:223.55px;width:45px;height:12px;overflow:hidden"><span class="t" style="left:0;top:0;color:#222">ireg[3:0]</span></div>
<div class="b " style="left:293.3px;top:235.46px;width:70px;height:0.6px;background:#e6e6e6"></div>
<svg class="b" style="left:305.7px;top:237.57px;" width="10" height="10" viewBox="-5 -5 10 10"><path d="M-3.2 -3.3h1.2v6.6M0.2 -3.3h1.3v3.4" fill="none" stroke="#3aa64a" stroke-width="0.8"/><rect x="-2.8" y="0.2" width="5.8" height="3.3" fill="#f59a23"/><rect x="-0.5" y="1.2" width="1" height="1.2" fill="#8a4b00"/></svg>
<div class="b" style="left:318.5px;top:237.17px;width:45px;height:12px;overflow:hidden"><span class="t" style="left:0;top:0;color:#222">ireq</span></div>
<div class="b " style="left:293.3px;top:249.08px;width:70px;height:0.6px;background:#e6e6e6"></div>
<svg class="b" style="left:305.7px;top:251.19px;" width="10" height="10" viewBox="-5 -5 10 10"><path d="M-3.2 -3.3h1.2v6.6M0.2 -3.3h1.3v3.4" fill="none" stroke="#3aa64a" stroke-width="0.8"/><rect x="-0.2" y="0.4" width="3.4" height="3.1" fill="#a2a9b2"/><path d="M0.6 0.4v-1.2h1.8v1.2" fill="none" stroke="#a2a9b2" stroke-width="0.6"/></svg>
<div class="b" style="left:318.5px;top:250.79px;width:45px;height:12px;overflow:hidden"><span class="t" style="left:0;top:0;color:#222">ireq_IBUF</span></div>
<div class="b " style="left:293.3px;top:262.7px;width:70px;height:0.6px;background:#e6e6e6"></div>
<svg class="b" style="left:295.3px;top:264.81px;" width="10" height="10" viewBox="-5 -5 10 10"><path d="M-1.4 -2.4L1.4 0L-1.4 2.4" fill="none" stroke="#666" stroke-width="1"/></svg>
<svg class="b" style="left:305.7px;top:264.81px;" width="10" height="10" viewBox="-5 -5 10 10"><rect x="-3.4" y="-3" width="2.9" height="3" fill="#8fb0dc"/><rect x="0.5" y="-3" width="2.9" height="3" fill="#8fb0dc"/><path d="M-3.4 0h6.8v1.4l-1.6 1.8h-3.6l-1.6 -1.8z" fill="#a2a9b2"/></svg>
<div class="b" style="left:318.5px;top:264.41px;width:45px;height:12px;overflow:hidden"><span class="t" style="left:0;top:0;color:#222">mul_out[7:2]</span></div>
<div class="b " style="left:293.3px;top:276.32px;width:70px;height:0.6px;background:#e6e6e6"></div>
<svg class="b" style="left:305.7px;top:278.43px;" width="10" height="10" viewBox="-5 -5 10 10"><path d="M-3.2 -3.3h1.2v6.6M0.2 -3.3h1.3v3.4" fill="none" stroke="#3aa64a" stroke-width="0.8"/><rect x="-0.2" y="0.4" width="3.4" height="3.1" fill="#a2a9b2"/><path d="M0.6 0.4v-1.2h1.8v1.2" fill="none" stroke="#a2a9b2" stroke-width="0.6"/></svg>
<div class="b" style="left:318.5px;top:278.03px;width:45px;height:12px;overflow:hidden"><span class="t" style="left:0;top:0;color:#222">\oreg[7]_i_1_</span></div>
<div class="b " style="left:293.3px;top:289.94px;width:70px;height:0.6px;background:#e6e6e6"></div>
<svg class="b" style="left:305.7px;top:292.05px;" width="10" height="10" viewBox="-5 -5 10 10"><path d="M-3.2 -3.3h1.2v6.6M0.2 -3.3h1.3v3.4" fill="none" stroke="#3aa64a" stroke-width="0.8"/><rect x="-2.8" y="0.2" width="5.8" height="3.3" fill="#2c8a3a"/><rect x="-0.5" y="1.2" width="1" height="1.2" fill="#0c4a16"/></svg>
<div class="b" style="left:318.5px;top:291.65px;width:45px;height:12px;overflow:hidden"><span class="t" style="left:0;top:0;color:#222">oreq</span></div>
<div class="b " style="left:293.3px;top:303.56px;width:70px;height:0.6px;background:#e6e6e6"></div>
<svg class="b" style="left:305.7px;top:305.67px;" width="10" height="10" viewBox="-5 -5 10 10"><path d="M-3.2 -3.3h1.2v6.6M0.2 -3.3h1.3v3.4" fill="none" stroke="#3aa64a" stroke-width="0.8"/><rect x="-0.2" y="0.4" width="3.4" height="3.1" fill="#a2a9b2"/><path d="M0.6 0.4v-1.2h1.8v1.2" fill="none" stroke="#a2a9b2" stroke-width="0.6"/></svg>
<div class="b" style="left:318.5px;top:305.27px;width:45px;height:12px;overflow:hidden"><span class="t" style="left:0;top:0;color:#222">oreq_OBUF</span></div>
<div class="b " style="left:293.3px;top:317.18px;width:70px;height:0.6px;background:#e6e6e6"></div>
<svg class="b" style="left:305.7px;top:319.29px;" width="10" height="10" viewBox="-5 -5 10 10"><path d="M-3.2 -3.3h1.2v6.6M0.2 -3.3h1.3v3.4" fill="none" stroke="#3aa64a" stroke-width="0.8"/><rect x="-0.2" y="0.4" width="3.4" height="3.1" fill="#a2a9b2"/><path d="M0.6 0.4v-1.2h1.8v1.2" fill="none" stroke="#a2a9b2" stroke-width="0.6"/></svg>
<div class="b" style="left:318.5px;top:318.89px;width:45px;height:12px;overflow:hidden"><span class="t" style="left:0;top:0;color:#222">req_d</span></div>
<div class="b " style="left:293.3px;top:330.8px;width:70px;height:0.6px;background:#e6e6e6"></div>
<svg class="b" style="left:305.7px;top:332.91px;" width="10" height="10" viewBox="-5 -5 10 10"><path d="M-3.2 -3.3h1.2v6.6M0.2 -3.3h1.3v3.4" fill="none" stroke="#3aa64a" stroke-width="0.8"/><rect x="-0.2" y="0.4" width="3.4" height="3.1" fill="#a2a9b2"/><path d="M0.6 0.4v-1.2h1.8v1.2" fill="none" stroke="#a2a9b2" stroke-width="0.6"/></svg>
<div class="b" style="left:318.5px;top:332.51px;width:45px;height:12px;overflow:hidden"><span class="t" style="left:0;top:0;color:#222">req_ireg</span></div>
<div class="b " style="left:293.3px;top:344.42px;width:70px;height:0.6px;background:#e6e6e6"></div>
<svg class="b" style="left:305.7px;top:346.53px;" width="10" height="10" viewBox="-5 -5 10 10"><path d="M-3.2 -3.3h1.2v6.6M0.2 -3.3h1.3v3.4" fill="none" stroke="#3aa64a" stroke-width="0.8"/><rect x="-2.8" y="0.2" width="5.8" height="3.3" fill="#f59a23"/><rect x="-0.5" y="1.2" width="1" height="1.2" fill="#8a4b00"/></svg>
<div class="b" style="left:318.5px;top:346.13px;width:45px;height:12px;overflow:hidden"><span class="t" style="left:0;top:0;color:#222">rstb</span></div>
<div class="b " style="left:293.3px;top:358.04px;width:70px;height:0.6px;background:#e6e6e6"></div>
<svg class="b" style="left:305.7px;top:360.15px;" width="10" height="10" viewBox="-5 -5 10 10"><path d="M-3.2 -3.3h1.2v6.6M0.2 -3.3h1.3v3.4" fill="none" stroke="#3aa64a" stroke-width="0.8"/><rect x="-0.2" y="0.4" width="3.4" height="3.1" fill="#a2a9b2"/><path d="M0.6 0.4v-1.2h1.8v1.2" fill="none" stroke="#a2a9b2" stroke-width="0.6"/></svg>
<div class="b" style="left:318.5px;top:359.75px;width:45px;height:12px;overflow:hidden"><span class="t" style="left:0;top:0;color:#222">rstb_IBUF</span></div>
<div class="b " style="left:363.7px;top:112.8px;width:9.3px;height:267.8px;background:#f6f6f6;border-left:0.5px solid #e4e4e4"></div>
<svg class="b" style="left:363.2px;top:114px;" width="10" height="10" viewBox="-5 -5 10 10"><path d="M-2.5 1.5L0 -1.5L2.5 1.5" fill="none" stroke="#5a5a5a" stroke-width="1.1"/></svg>
<svg class="b" style="left:363.2px;top:371px;" width="10" height="10" viewBox="-5 -5 10 10"><path d="M-2.5 -1.5L0 1.5L2.5 -1.5" fill="none" stroke="#5a5a5a" stroke-width="1.1"/></svg>
<div class="b " style="left:366.2px;top:123.5px;width:3.6px;height:207px;background:#c2c2c2;border-radius:2px"></div>
<div class="b " style="left:293.3px;top:371.5px;width:70.4px;height:9.1px;background:#f6f6f6"></div>
<svg class="b" style="left:293.8px;top:371.1px;" width="10" height="10" viewBox="-5 -5 10 10"><path d="M1.5 -2.5L-1.5 0L1.5 2.5" fill="none" stroke="#5a5a5a" stroke-width="1.1"/></svg>
<svg class="b" style="left:354.5px;top:371.1px;" width="10" height="10" viewBox="-5 -5 10 10"><path d="M-1.5 -2.5L1.5 0L-1.5 2.5" fill="none" stroke="#5a5a5a" stroke-width="1.1"/></svg>
<div class="b " style="left:304.3px;top:373.7px;width:19.6px;height:4.6px;background:#c0c0c0;border-radius:2.3px"></div>
<div class="b " style="left:381.5px;top:75.2px;width:372.8px;height:306.4px;background:#fff;border:1px solid #dadada"></div>
<div class="b " style="left:382.5px;top:76.2px;width:370.8px;height:16.5px;background:#ebebeb"></div>
<span class="t bd" style="left:386.8px;top:79px;">Untitled 1*</span>
<span class="t " style="left:705.05px;top:80.1px;color:#7d7d7d;font-size:8.5px">?</span>
<svg class="b" style="left:714.75px;top:80px;" width="10" height="10" viewBox="-5 -5 10 10"><rect x="-2.5" y="-2.5" width="5" height="5" fill="none" stroke="#7d7d7d" stroke-width="0.9"/></svg>
<svg class="b" style="left:726.5px;top:80px;" width="10" height="10" viewBox="-5 -5 10 10"><path d="M0.2 -2.5h-2.7v5h5v-2.7" fill="none" stroke="#7d7d7d" stroke-width="0.9"/><path d="M0.2 -0.2L2.7 -2.7M1.2 -2.8h1.6v1.6" fill="none" stroke="#7d7d7d" stroke-width="0.8"/></svg>
<svg class="b" style="left:738.5px;top:80px;" width="10" height="10" viewBox="-5 -5 10 10"><path d="M-2.6 -2.6L2.6 2.6M2.6 -2.6L-2.6 2.6" stroke="#7d7d7d" stroke-width="1"/></svg>
<div class="b " style="left:403.7px;top:97.1px;width:0.6px;height:11px;background:#dcdcdc"></div>
<div class="b " style="left:424.48px;top:97.1px;width:0.6px;height:11px;background:#dcdcdc"></div>
<div class="b " style="left:445.26px;top:97.1px;width:0.6px;height:11px;background:#dcdcdc"></div>
<div class="b " style="left:466.04px;top:97.1px;width:0.6px;height:11px;background:#dcdcdc"></div>
<div class="b " style="left:486.82px;top:97.1px;width:0.6px;height:11px;background:#dcdcdc"></div>
<div class="b " style="left:507.6px;top:97.1px;width:0.6px;height:11px;background:#dcdcdc"></div>
<div class="b " style="left:528.38px;top:97.1px;width:0.6px;height:11px;background:#dcdcdc"></div>
<div class="b " style="left:549.16px;top:97.1px;width:0.6px;height:11px;background:#dcdcdc"></div>
<div class="b " style="left:569.94px;top:97.1px;width:0.6px;height:11px;background:#dcdcdc"></div>
<div class="b " style="left:590.72px;top:97.1px;width:0.6px;height:11px;background:#dcdcdc"></div>
<div class="b " style="left:611.5px;top:97.1px;width:0.6px;height:11px;background:#dcdcdc"></div>
<div class="b " style="left:632.28px;top:97.1px;width:0.6px;height:11px;background:#dcdcdc"></div>
<div class="b " style="left:653.06px;top:97.1px;width:0.6px;height:11px;background:#dcdcdc"></div>
<div class="b " style="left:673.84px;top:97.1px;width:0.6px;height:11px;background:#dcdcdc"></div>
<svg class="b" style="left:388.6px;top:97.6px;" width="10" height="10" viewBox="-5 -5 10 10"><circle cx="-0.7" cy="-0.7" r="2.9" fill="none" stroke="#1f3d7a" stroke-width="1.05"/><path d="M1.5 1.5L3.8 3.8" stroke="#1f3d7a" stroke-width="1.3"/></svg>
<svg class="b" style="left:409.38px;top:97.6px;" width="10" height="10" viewBox="-5 -5 10 10"><path d="M-3.6 -3.6h5.8l1.4 1.4v5.8h-7.2z" fill="#1f3d7a"/><rect x="-1.9" y="-3.6" width="3.2" height="2.6" fill="#fff"/><rect x="0" y="-3.2" width="1" height="1.8" fill="#1f3d7a"/></svg>
<svg class="b" style="left:430.16px;top:97.6px;" width="10" height="10" viewBox="-5 -5 10 10"><circle cx="-0.6" cy="-0.6" r="3" fill="none" stroke="#1f3d7a" stroke-width="1"/><path d="M1.6 1.6L3.9 3.9" stroke="#1f3d7a" stroke-width="1.3"/><path d="M-2.3 -0.6h3.4" stroke="#1f3d7a" stroke-width="0.9"/><path d="M-0.6 -2.3v3.4" stroke="#1f3d7a" stroke-width="0.9"/></svg>
<svg class="b" style="left:450.94px;top:97.6px;" width="10" height="10" viewBox="-5 -5 10 10"><circle cx="-0.6" cy="-0.6" r="3" fill="none" stroke="#1f3d7a" stroke-width="1"/><path d="M1.6 1.6L3.9 3.9" stroke="#1f3d7a" stroke-width="1.3"/><path d="M-2.3 -0.6h3.4" stroke="#1f3d7a" stroke-width="0.9"/></svg>
<svg class="b" style="left:471.72px;top:97.6px;" width="10" height="10" viewBox="-5 -5 10 10"><path d="M-3.7 -1.5v-2.2h2.2M3.7 -1.5v-2.2h-2.2M-3.7 1.5v2.2h2.2M3.7 1.5v2.2h-2.2" fill="none" stroke="#1f3d7a" stroke-width="1.1"/><path d="M-3.2 -3.2l2.2 2.2M3.2 -3.2l-2.2 2.2M-3.2 3.2l2.2 -2.2M3.2 3.2l-2.2 -2.2" fill="none" stroke="#1f3d7a" stroke-width="1"/></svg>
<svg class="b" style="left:492.5px;top:97.6px;" width="10" height="10" viewBox="-5 -5 10 10"><path d="M0 0L-1.8 -1.8V-0.8H-3.6V0.8H-1.8V1.8z" fill="#1f3d7a" transform="translate(0.2,0.2)"/><path d="M1.8 3.8v-7.2h2" fill="none" stroke="#e8c547" stroke-width="1.1"/></svg>
<svg class="b" style="left:513.28px;top:97.6px;" width="10" height="10" viewBox="-5 -5 10 10"><rect x="-3.4" y="-3.6" width="1.4" height="7.2" fill="#1f3d7a"/><path d="M3.4 -3.6L-1.6 0L3.4 3.6z" fill="#1f3d7a"/></svg>
<svg class="b" style="left:534.06px;top:97.6px;" width="10" height="10" viewBox="-5 -5 10 10"><rect x="2" y="-3.6" width="1.4" height="7.2" fill="#1f3d7a"/><path d="M-3.4 -3.6L1.6 0L-3.4 3.6z" fill="#1f3d7a"/></svg>
<svg class="b" style="left:554.84px;top:97.6px;" width="10" height="10" viewBox="-5 -5 10 10"><path d="M-3.9 3.1H3.9M-2 3.1V-0.6H0" fill="none" stroke="#35b02e" stroke-width="1.2"/><path d="M0 0L1.8 -1.8V-0.8H3.6V0.8H1.8V1.8z" fill="#1f3d7a" transform="translate(0.2,-1.9)"/></svg>
<svg class="b" style="left:575.62px;top:97.6px;" width="10" height="10" viewBox="-5 -5 10 10"><path d="M-3.9 3.1H3.9M2.6 3.1V-0.6H0.6M2.6 -0.6H3.9" fill="none" stroke="#35b02e" stroke-width="1.2"/><path d="M0 0L-1.8 -1.8V-0.8H-3.6V0.8H-1.8V1.8z" fill="#1f3d7a" transform="translate(0.2,-1.9)"/></svg>
<svg class="b" style="left:596.4px;top:97.6px;" width="10" height="10" viewBox="-5 -5 10 10"><path d="M-4 -0.4h3M-2.5 -1.9v3" stroke="#35b02e" stroke-width="1"/><path d="M0.9 3.8v-7.2h2.6" fill="none" stroke="#1f3d7a" stroke-width="1.1"/></svg>
<svg class="b" style="left:617.18px;top:97.6px;" width="10" height="10" viewBox="-5 -5 10 10"><path d="M-2.8 3.8v-7.2h2.4" fill="none" stroke="#1f3d7a" stroke-width="1.1"/><path d="M0 0L1.8 -1.8V-0.8H3.6V0.8H1.8V1.8z" fill="#1f3d7a" transform="translate(-0.6,0.8)"/></svg>
<svg class="b" style="left:637.96px;top:97.6px;" width="10" height="10" viewBox="-5 -5 10 10"><path d="M0 0L-1.8 -1.8V-0.8H-3.6V0.8H-1.8V1.8z" fill="#b9b9b9" transform="translate(-0.6,0.8) scale(0.8)"/><path d="M0.8 3.8v-7.2h2.4" fill="none" stroke="#b9b9b9" stroke-width="1"/></svg>
<svg class="b" style="left:658.74px;top:97.6px;" width="10" height="10" viewBox="-5 -5 10 10"><path d="M-3.2 -3.2v6.4M3.2 -3.2v6.4M-3.2 0h6.4" fill="none" stroke="#b9b9b9" stroke-width="0.9"/></svg>
<svg class="b" style="left:736.75px;top:97.6px;" width="10" height="10" viewBox="-5 -5 10 10"><g fill="#1f3d7a"><circle r="2.9"/><g ><rect x="-0.9" y="-4.1" width="1.8" height="8.2"/></g><rect x="-0.9" y="-4.1" width="1.8" height="8.2" transform="rotate(45)"/><rect x="-0.9" y="-4.1" width="1.8" height="8.2" transform="rotate(90)"/><rect x="-0.9" y="-4.1" width="1.8" height="8.2" transform="rotate(135)"/></g><circle r="1.3" fill="#fff"/></svg>
<div class="b " style="left:383px;top:113.8px;width:116.2px;height:15px;background:#000"></div>
<div class="b " style="left:383px;top:128.8px;width:67.8px;height:250.8px;background:#000"></div>
<div class="b " style="left:453.3px;top:128.8px;width:45.9px;height:243.2px;background:#000"></div>
<div class="b " style="left:383px;top:128.8px;width:67.8px;height:17.9px;background:linear-gradient(#e4e4e4,#f7f7f7)"></div>
<div class="b " style="left:453.3px;top:128.8px;width:45.9px;height:17.9px;background:linear-gradient(#e4e4e4,#f7f7f7)"></div>
<span class="t bd" style="left:392.2px;top:132px;">Name</span>
<span class="t bd" style="left:462.5px;top:132px;">Value</span>
<div class="b " style="left:383px;top:347.2px;width:67.8px;height:1.2px;background:#666"></div>
<div class="b " style="left:453.3px;top:347.2px;width:45.9px;height:1.2px;background:#666"></div>
<svg class="b" style="left:385.5px;top:148.85px;" width="10" height="10" viewBox="-5 -5 10 10"><path d="M-1.3 -2.2L1.3 0L-1.3 2.2" fill="none" stroke="#d0d0d0" stroke-width="1"/></svg>
<svg class="b" style="left:395.2px;top:148.85px;" width="10" height="10" viewBox="-5 -5 10 10"><rect x="-3.2" y="-3" width="2.8" height="3.2" fill="#b9cdea"/><rect x="0.5" y="-3" width="2.8" height="3.2" fill="#b9cdea"/><circle cx="0.1" cy="0.9" r="1.8" fill="#f59a23"/></svg>
<span class="t " style="left:406.3px;top:147.85px;color:#f0f0f0">data_i[3:0]</span>
<span class="t " style="left:457.7px;top:147.85px;color:#f0f0f0">7</span>
<svg class="b" style="left:385.5px;top:162.55px;" width="10" height="10" viewBox="-5 -5 10 10"><path d="M-1.3 -2.2L1.3 0L-1.3 2.2" fill="none" stroke="#d0d0d0" stroke-width="1"/></svg>
<svg class="b" style="left:395.2px;top:162.55px;" width="10" height="10" viewBox="-5 -5 10 10"><rect x="-3.2" y="-3" width="2.8" height="3.2" fill="#b9cdea"/><rect x="0.5" y="-3" width="2.8" height="3.2" fill="#b9cdea"/><circle cx="0.1" cy="0.9" r="1.7" fill="#9a9a9a"/><circle cx="0.1" cy="0.9" r="0.7" fill="#222"/></svg>
<span class="t " style="left:406.3px;top:161.55px;color:#f0f0f0">data_o[7:0]</span>
<span class="t " style="left:457.7px;top:161.55px;color:#f0f0f0">00</span>
<svg class="b" style="left:395.2px;top:176.25px;" width="10" height="10" viewBox="-5 -5 10 10"><path d="M-3 -3h1.4v5.8M0.6 -3h1.3v2.8" fill="none" stroke="#2fae3f" stroke-width="0.9"/><circle cx="1.3" cy="2" r="1.7" fill="#f59a23"/></svg>
<span class="t " style="left:406.3px;top:175.25px;color:#f0f0f0">ireq</span>
<span class="t " style="left:457.7px;top:175.25px;color:#f0f0f0">1</span>
<svg class="b" style="left:395.2px;top:189.95px;" width="10" height="10" viewBox="-5 -5 10 10"><path d="M-3 -3h1.4v5.8M0.6 -3h1.3v2.8" fill="none" stroke="#2fae3f" stroke-width="0.9"/><circle cx="1.3" cy="2" r="1.6" fill="#d0d0d0"/><circle cx="1.3" cy="2" r="0.7" fill="#333"/></svg>
<span class="t " style="left:406.3px;top:188.95px;color:#f0f0f0">oreq</span>
<span class="t " style="left:457.7px;top:188.95px;color:#f0f0f0">0</span>
<svg class="b" style="left:395.2px;top:203.65px;" width="10" height="10" viewBox="-5 -5 10 10"><path d="M-3 -3h1.4v5.8M0.6 -3h1.3v2.8" fill="none" stroke="#2fae3f" stroke-width="0.9"/><circle cx="1.3" cy="2" r="1.7" fill="#f59a23"/></svg>
<span class="t " style="left:406.3px;top:202.65px;color:#f0f0f0">clk</span>
<span class="t " style="left:457.7px;top:202.65px;color:#f0f0f0">1</span>
<svg class="b" style="left:395.2px;top:217.35px;" width="10" height="10" viewBox="-5 -5 10 10"><path d="M-3 -3h1.4v5.8M0.6 -3h1.3v2.8" fill="none" stroke="#2fae3f" stroke-width="0.9"/><circle cx="1.3" cy="2" r="1.7" fill="#f59a23"/></svg>
<span class="t " style="left:406.3px;top:216.35px;color:#f0f0f0">rstb</span>
<span class="t " style="left:457.7px;top:216.35px;color:#f0f0f0">1</span>
<svg class="b" style="left:385.5px;top:231.05px;" width="10" height="10" viewBox="-5 -5 10 10"><path d="M-1.3 -2.2L1.3 0L-1.3 2.2" fill="none" stroke="#d0d0d0" stroke-width="1"/></svg>
<svg class="b" style="left:395.2px;top:231.05px;" width="10" height="10" viewBox="-5 -5 10 10"><rect x="-3.2" y="-3" width="2.8" height="3.2" fill="#b9cdea"/><rect x="0.5" y="-3" width="2.8" height="3.2" fill="#b9cdea"/><circle cx="0.1" cy="0.9" r="1.6" fill="#8d97a6"/><circle cx="0.1" cy="0.9" r="0.6" fill="#e8e8e8"/></svg>
<span class="t " style="left:406.3px;top:230.05px;color:#f0f0f0">ireg[3:0]</span>
<span class="t " style="left:457.7px;top:230.05px;color:#f0f0f0">7</span>
<div class="b " style="left:396.2px;top:242.75px;width:54.6px;height:13.25px;background:#cfe0fc"></div>
<div class="b " style="left:455.9px;top:242.75px;width:40.6px;height:13.25px;background:#cfe0fc;border:0.6px solid #7aa2e6"></div>
<svg class="b" style="left:385.5px;top:244.75px;" width="10" height="10" viewBox="-5 -5 10 10"><path d="M-1.3 -2.2L1.3 0L-1.3 2.2" fill="none" stroke="#d0d0d0" stroke-width="1"/></svg>
<svg class="b" style="left:395.2px;top:244.75px;" width="10" height="10" viewBox="-5 -5 10 10"><rect x="-3.2" y="-3" width="2.8" height="3.2" fill="#b9cdea"/><rect x="0.5" y="-3" width="2.8" height="3.2" fill="#b9cdea"/><circle cx="0.1" cy="0.9" r="1.6" fill="#8d97a6"/><circle cx="0.1" cy="0.9" r="0.6" fill="#e8e8e8"/></svg>
<span class="t " style="left:406.3px;top:243.75px;color:#111">mul_out[7:2]</span>
<span class="t " style="left:457.7px;top:243.75px;color:#111">0c</span>
<svg class="b" style="left:395.2px;top:258.45px;" width="10" height="10" viewBox="-5 -5 10 10"><path d="M-3 -3h1.4v5.8M0.6 -3h1.3v2.8" fill="none" stroke="#2fae3f" stroke-width="0.9"/><circle cx="1.3" cy="2" r="1.6" fill="#d0d0d0"/><circle cx="1.3" cy="2" r="0.7" fill="#333"/></svg>
<span class="t " style="left:406.3px;top:257.45px;color:#f0f0f0">req_ireg</span>
<span class="t " style="left:457.7px;top:257.45px;color:#f0f0f0">1</span>
<svg class="b" style="left:395.2px;top:272.15px;" width="10" height="10" viewBox="-5 -5 10 10"><path d="M-3 -3h1.4v5.8M0.6 -3h1.3v2.8" fill="none" stroke="#2fae3f" stroke-width="0.9"/><circle cx="1.3" cy="2" r="1.6" fill="#d0d0d0"/><circle cx="1.3" cy="2" r="0.7" fill="#333"/></svg>
<span class="t " style="left:406.3px;top:271.15px;color:#f0f0f0">req_d</span>
<span class="t " style="left:457.7px;top:271.15px;color:#f0f0f0">1</span>
<div class="b " style="left:453.3px;top:372px;width:45.9px;height:8.6px;background:#f6f6f6"></div>
<svg class="b" style="left:453px;top:371px;" width="10" height="10" viewBox="-5 -5 10 10"><path d="M1.5 -2.5L-1.5 0L1.5 2.5" fill="none" stroke="#5a5a5a" stroke-width="1.1"/></svg>
<svg class="b" style="left:490px;top:371px;" width="10" height="10" viewBox="-5 -5 10 10"><path d="M-1.5 -2.5L1.5 0L-1.5 2.5" fill="none" stroke="#5a5a5a" stroke-width="1.1"/></svg>
<div class="b " style="left:501.7px;top:113.8px;width:241.9px;height:258.2px;background:#000"></div>
<svg class="b" style="left:501px;top:113px;overflow:hidden" width="243" height="259" viewBox="501 113 243 259" font-family="Liberation Mono, monospace" font-size="7" letter-spacing="-0.625"><path d="M503.4 149.25 L742 149.25" fill="none" stroke="#00c800" stroke-width="0.9" stroke-linejoin="round"/><path d="M503.4 159.65 L742 159.65" fill="none" stroke="#00c800" stroke-width="0.9" stroke-linejoin="round"/><text x="622" y="156.25" text-anchor="middle" fill="#e6e6e6">7</text><path d="M503.4 162.93 L742 162.93" fill="none" stroke="#00c800" stroke-width="0.9" stroke-linejoin="round"/><path d="M503.4 173.33 L742 173.33" fill="none" stroke="#00c800" stroke-width="0.9" stroke-linejoin="round"/><text x="622" y="169.93" text-anchor="middle" fill="#e6e6e6">00</text><rect x="503.4" y="176.81" width="238.6" height="10.1" fill="#064d06" stroke="#12a012" stroke-width="0.7"/><path d="M503.4 176.81H742" stroke="#00c800" stroke-width="1"/><path d="M503.4 200.59H742" stroke="#00c800" stroke-width="0.9"/><rect x="503.4" y="204.17" width="238.6" height="10.1" fill="#064d06" stroke="#12a012" stroke-width="0.7"/><path d="M503.4 204.17H742" stroke="#00c800" stroke-width="1"/><rect x="503.4" y="217.85" width="238.6" height="10.1" fill="#064d06" stroke="#12a012" stroke-width="0.7"/><path d="M503.4 217.85H742" stroke="#00c800" stroke-width="1"/><path d="M503.4 231.33 L558.1 231.33 L562.1 241.73 L566.7 241.73 L570.7 231.33 L742 231.33" fill="none" stroke="#00c800" stroke-width="0.9" stroke-linejoin="round"/><path d="M503.4 241.73 L558.1 241.73 L562.1 231.33 L566.7 231.33 L570.7 241.73 L742 241.73" fill="none" stroke="#00c800" stroke-width="0.9" stroke-linejoin="round"/><text x="530.3" y="238.33" text-anchor="middle" fill="#e6e6e6">8</text><text x="654.8" y="238.33" text-anchor="middle" fill="#e6e6e6">7</text><path d="M503.4 245.01 L657 245.01 L661 255.41 L677.9 255.41 L681.9 245.01 L699.6 245.01 L703.6 255.41 L703.7 255.41 L707.7 245.01 L742 245.01" fill="none" stroke="#00c800" stroke-width="1.4" stroke-linejoin="round"/><path d="M503.4 255.41 L657 255.41 L661 245.01 L677.9 245.01 L681.9 255.41 L699.6 255.41 L703.6 245.01 L703.7 245.01 L707.7 255.41 L742 255.41" fill="none" stroke="#00c800" stroke-width="1.4" stroke-linejoin="round"/><text x="579" y="252.01" text-anchor="middle" fill="#e6e6e6">00</text><text x="669.3" y="252.01" text-anchor="middle" fill="#e6e6e6">01</text><text x="690.7" y="252.01" text-anchor="middle" fill="#e6e6e6">02</text><text x="724.2" y="252.01" text-anchor="middle" fill="#e6e6e6">0c</text><path d="M503.4 268.99H564.4" stroke="#00c800" stroke-width="0.9"/><rect x="564.4" y="258.89" width="177.6" height="10.1" fill="#064d06" stroke="#12a012" stroke-width="0.7"/><path d="M564.4 258.89H742" stroke="#00c800" stroke-width="1"/><path d="M564.4 258.89V268.99" stroke="#00c800" stroke-width="0.9"/><path d="M503.4 282.67H641.2" stroke="#00c800" stroke-width="0.9"/><rect x="641.2" y="272.57" width="100.8" height="10.1" fill="#064d06" stroke="#12a012" stroke-width="0.7"/><path d="M641.2 272.57H742" stroke="#00c800" stroke-width="1"/><path d="M641.2 272.57V282.67" stroke="#00c800" stroke-width="0.9"/><path d="M503.4 146.7H742" stroke="#bdbdbd" stroke-width="0.7"/><path d="M503.7 144.4V147" stroke="#bdbdbd" stroke-width="0.6"/><path d="M515.6 144.4V147" stroke="#bdbdbd" stroke-width="0.6"/><path d="M527.5 144.4V147" stroke="#bdbdbd" stroke-width="0.6"/><path d="M539.4 144.4V147" stroke="#bdbdbd" stroke-width="0.6"/><path d="M551.3 144.4V147" stroke="#bdbdbd" stroke-width="0.6"/><path d="M563.2 144.4V147" stroke="#bdbdbd" stroke-width="0.6"/><path d="M575.1 144.4V147" stroke="#bdbdbd" stroke-width="0.6"/><path d="M587 144.4V147" stroke="#bdbdbd" stroke-width="0.6"/><path d="M598.9 144.4V147" stroke="#bdbdbd" stroke-width="0.6"/><path d="M610.8 144.4V147" stroke="#bdbdbd" stroke-width="0.6"/><path d="M622.7 144.4V147" stroke="#bdbdbd" stroke-width="0.6"/><path d="M634.6 144.4V147" stroke="#bdbdbd" stroke-width="0.6"/><path d="M646.5 144.4V147" stroke="#bdbdbd" stroke-width="0.6"/><path d="M658.4 144.4V147" stroke="#bdbdbd" stroke-width="0.6"/><path d="M670.3 144.4V147" stroke="#bdbdbd" stroke-width="0.6"/><path d="M682.2 144.4V147" stroke="#bdbdbd" stroke-width="0.6"/><path d="M694.1 144.4V147" stroke="#bdbdbd" stroke-width="0.6"/><path d="M706 144.4V147" stroke="#bdbdbd" stroke-width="0.6"/><path d="M717.9 144.4V147" stroke="#bdbdbd" stroke-width="0.6"/><path d="M729.8 144.4V147" stroke="#bdbdbd" stroke-width="0.6"/><path d="M741.7 144.4V147" stroke="#bdbdbd" stroke-width="0.6"/><path d="M551.5 136.4V347.5" stroke="#7c7c7c" stroke-width="0.8"/><text x="552.3" y="141.2" fill="#e6e6e6">285.5 ns</text><path d="M610.5 136.4V347.5" stroke="#7c7c7c" stroke-width="0.8"/><text x="611.8" y="141.2" fill="#e6e6e6">286.0 ns</text><path d="M670.5 136.4V347.5" stroke="#7c7c7c" stroke-width="0.8"/><text x="671.3" y="141.2" fill="#e6e6e6">286.5 ns</text><path d="M729.5 136.4V347.5" stroke="#7c7c7c" stroke-width="0.8"/><text x="730.8" y="141.2" fill="#e6e6e6">287.0 ns</text><path d="M503.4 347.8H742.2" stroke="#5e5e5e" stroke-width="1.2"/><rect x="560.1" y="125" width="38.3" height="9.6" fill="#1e8fff"/><path d="M560.5 125V347.5" stroke="#1188ff" stroke-width="1"/><text x="561.9" y="132.4" fill="#000" stroke="#000" stroke-width="0.12">285.581 ns</text><rect x="641.1" y="125" width="38.3" height="9.6" fill="#1e8fff"/><path d="M641.5 125V347.5" stroke="#1188ff" stroke-width="1"/><text x="642.9" y="132.4" fill="#000" stroke="#000" stroke-width="0.12">286.260 ns</text><rect x="687" y="113.8" width="37.8" height="8.8" fill="#ffff00"/><path d="M705.5 113.8V347.5" stroke="#ffff00" stroke-width="1"/><text x="688.2" y="120.8" fill="#000" stroke="#000" stroke-width="0.12">286.804 ns</text></svg>
<div class="b " style="left:743.6px;top:113.8px;width:9.7px;height:266px;background:#f6f6f6"></div>
<svg class="b" style="left:743px;top:113.2px;" width="10" height="10" viewBox="-5 -5 10 10"><path d="M-2.5 1.5L0 -1.5L2.5 1.5" fill="none" stroke="#5a5a5a" stroke-width="1.1"/></svg>
<svg class="b" style="left:743px;top:362px;" width="10" height="10" viewBox="-5 -5 10 10"><path d="M-2.5 -1.5L0 1.5L2.5 -1.5" fill="none" stroke="#5a5a5a" stroke-width="1.1"/></svg>
<div class="b " style="left:501.7px;top:372px;width:251.6px;height:8.6px;background:#f6f6f6"></div>
<svg class="b" style="left:501.5px;top:371px;" width="10" height="10" viewBox="-5 -5 10 10"><path d="M1.5 -2.5L-1.5 0L1.5 2.5" fill="none" stroke="#5a5a5a" stroke-width="1.1"/></svg>
<svg class="b" style="left:743px;top:371px;" width="10" height="10" viewBox="-5 -5 10 10"><path d="M-1.5 -2.5L1.5 0L-1.5 2.5" fill="none" stroke="#5a5a5a" stroke-width="1.1"/></svg>
<div class="b " style="left:555.3px;top:373.6px;width:19.7px;height:4.6px;background:#c0c0c0;border-radius:2.3px"></div>
<div class="b " style="left:169.3px;top:389.3px;width:585px;height:114.7px;background:#fff;border:1px solid #dadada"></div>
<div class="b " style="left:170.3px;top:390.3px;width:583px;height:17.4px;background:#ebebeb"></div>
<div class="b " style="left:170.3px;top:390.3px;width:70.4px;height:17.4px;background:#fff"></div>
<span class="t bd" style="left:174px;top:393px;">Tcl Console</span>
<svg class="b" style="left:230px;top:394.8px;" width="10" height="10" viewBox="-5 -5 10 10"><path d="M-1.9 -1.9L1.9 1.9M1.9 -1.9L-1.9 1.9" stroke="#8a8a8a" stroke-width="0.7"/></svg>
<span class="t bd" style="left:244.7px;top:393px;color:#8a8a8a">Messages</span>
<div class="b " style="left:287px;top:392.5px;width:0.6px;height:13.5px;background:#d0d0d0"></div>
<span class="t bd" style="left:291.2px;top:393px;color:#8a8a8a">Log</span>
<div class="b " style="left:312.4px;top:392.5px;width:0.6px;height:13.5px;background:#d0d0d0"></div>
<span class="t " style="left:705.3px;top:394.6px;color:#7d7d7d;font-size:8.5px">?</span>
<div class="b " style="left:716.7px;top:401.4px;width:6px;height:1px;background:#7d7d7d"></div>
<svg class="b" style="left:726.7px;top:394.5px;" width="10" height="10" viewBox="-5 -5 10 10"><rect x="-2.5" y="-2.5" width="5" height="5" fill="none" stroke="#7d7d7d" stroke-width="0.9"/></svg>
<svg class="b" style="left:738.7px;top:394.5px;" width="10" height="10" viewBox="-5 -5 10 10"><path d="M0.2 -2.5h-2.7v5h5v-2.7" fill="none" stroke="#7d7d7d" stroke-width="0.9"/><path d="M0.2 -0.2L2.7 -2.7M1.2 -2.8h1.6v1.6" fill="none" stroke="#7d7d7d" stroke-width="0.8"/></svg>
<svg class="b" style="left:175.3px;top:412.3px;" width="10" height="10" viewBox="-5 -5 10 10"><circle cx="-0.7" cy="-0.7" r="2.9" fill="none" stroke="#1f3d7a" stroke-width="1.05"/><path d="M1.5 1.5L3.8 3.8" stroke="#1f3d7a" stroke-width="1.3"/></svg>
<div class="b " style="left:190.2px;top:412.3px;width:0.6px;height:10px;background:#dcdcdc"></div>
<svg class="b" style="left:196.2px;top:412.3px;" width="10" height="10" viewBox="-5 -5 10 10"><path d="M-2.6 -3.6h5.2M-2.6 3.6h5.2M-3 0h6" stroke="#1f3d7a" stroke-width="0.8"/><path d="M-1.8 -3h3.6L0 -0.8zM-1.8 3h3.6L0 0.8z" fill="#1f3d7a"/></svg>
<div class="b " style="left:211.3px;top:412.3px;width:0.6px;height:10px;background:#dcdcdc"></div>
<svg class="b" style="left:217px;top:412.3px;" width="10" height="10" viewBox="-5 -5 10 10"><path d="M-3 -0.6Q-1.8 -2.6 0 -3.7Q1.8 -2.6 3 -0.6zM-3 0.6Q-1.8 2.6 0 3.7Q1.8 2.6 3 0.6z" fill="#1f3d7a"/></svg>
<div class="b " style="left:232.1px;top:412.3px;width:0.6px;height:10px;background:#dcdcdc"></div>
<svg class="b" style="left:237.6px;top:412.3px;" width="10" height="10" viewBox="-5 -5 10 10"><rect x="-2.6" y="-3.6" width="1.6" height="7.2" fill="#1f3d7a"/><rect x="1" y="-3.6" width="1.6" height="7.2" fill="#1f3d7a"/></svg>
<div class="b " style="left:252.95px;top:412.3px;width:0.6px;height:10px;background:#dcdcdc"></div>
<svg class="b" style="left:258.5px;top:412.3px;" width="10" height="10" viewBox="-5 -5 10 10"><rect x="-3.2" y="-3.6" width="4.6" height="5.6" fill="#fff" stroke="#1f3d7a" stroke-width="0.7"/><rect x="-1.2" y="-1.8" width="4.4" height="5.4" fill="#1f3d7a"/><rect x="-0.2" y="-0.6" width="2.4" height="3" fill="#dfe6f3"/></svg>
<div class="b " style="left:273.7px;top:412.3px;width:0.6px;height:10px;background:#dcdcdc"></div>
<svg class="b" style="left:279.5px;top:412.3px;" width="10" height="10" viewBox="-5 -5 10 10"><rect x="-3.6" y="-3.4" width="7.2" height="6.8" fill="#1f3d7a"/><path d="M-2.8 -1.8h1.6M-2.8 0h1.6M-2.8 1.8h1.6M2.8 -1.8h-1.6M2.8 0h-1.6M2.8 1.8h-1.6" stroke="#fff" stroke-width="0.7"/><rect x="-0.5" y="-3" width="1" height="6" fill="#dfe6f3"/></svg>
<div class="b " style="left:294.4px;top:412.3px;width:0.6px;height:10px;background:#dcdcdc"></div>
<svg class="b" style="left:300px;top:412.3px;" width="10" height="10" viewBox="-5 -5 10 10"><rect x="-2.6" y="-2" width="5.2" height="5.8" fill="#1f3d7a"/><rect x="-3.4" y="-3.2" width="6.8" height="1" fill="#1f3d7a"/><rect x="-1.2" y="-4.2" width="2.4" height="1.2" fill="#1f3d7a"/><path d="M-1.1 -0.8v3.6M1.1 -0.8v3.6" stroke="#dfe6f3" stroke-width="0.6"/></svg>
<div class="b " style="left:315.45px;top:412.3px;width:0.6px;height:10px;background:#dcdcdc"></div>
<div class="b " style="left:170.3px;top:427px;width:583px;height:0.6px;background:#dcdcdc"></div>
<div class="b " style="left:177.3px;top:428.5px;width:0px;height:47px;border-left:0.7px dotted #777"></div>
<span class="t " style="left:185px;top:427px;color:#222">Compiling module xil_defaultlib.main</span>
<span class="t " style="left:185px;top:436.6px;color:#222">Compiling module xil_defaultlib.testmain</span>
<span class="t " style="left:185px;top:446px;color:#222">Compiling module xil_defaultlib.glbl</span>
<span class="t " style="left:185px;top:455.6px;color:#222">Built simulation snapshot testmain_time_impl</span>
<span class="t" style="left:185px;top:465px;color:#222"><b style="color:#111">INFO:</b> [USF-XSim-69] 'elaborate' step finished in '2' seconds</span>
<div class="b " style="left:738.3px;top:427.6px;width:7.5px;height:50px;background:#f6f6f6"></div>
<svg class="b" style="left:737.1px;top:427.8px;" width="10" height="10" viewBox="-5 -5 10 10"><path d="M-2.5 1.5L0 -1.5L2.5 1.5" fill="none" stroke="#5a5a5a" stroke-width="1.1"/></svg>
<svg class="b" style="left:737.1px;top:468.8px;" width="10" height="10" viewBox="-5 -5 10 10"><path d="M-2.5 -1.5L0 1.5L2.5 -1.5" fill="none" stroke="#5a5a5a" stroke-width="1.1"/></svg>
<div class="b " style="left:740.2px;top:447px;width:3.6px;height:19px;background:#c2c2c2;border-radius:2px"></div>
<div class="b " style="left:185px;top:477.5px;width:553.3px;height:8px;background:#f6f6f6"></div>
<svg class="b" style="left:184.7px;top:476.6px;" width="10" height="10" viewBox="-5 -5 10 10"><path d="M1.5 -2.5L-1.5 0L1.5 2.5" fill="none" stroke="#5a5a5a" stroke-width="1.1"/></svg>
<svg class="b" style="left:729.4px;top:476.6px;" width="10" height="10" viewBox="-5 -5 10 10"><path d="M-1.5 -2.5L1.5 0L-1.5 2.5" fill="none" stroke="#5a5a5a" stroke-width="1.1"/></svg>
<div class="b " style="left:195.3px;top:479.3px;width:221px;height:4.6px;background:#c0c0c0;border-radius:2.3px"></div>
<div class="b " style="left:172px;top:488.4px;width:577.7px;height:12.9px;background:#fff;border:0.6px solid #d2d2d2"></div>
<span class="t " style="left:176.5px;top:488.5px;color:#9a9a9a">Type a Tcl command here</span>
</body></html>
